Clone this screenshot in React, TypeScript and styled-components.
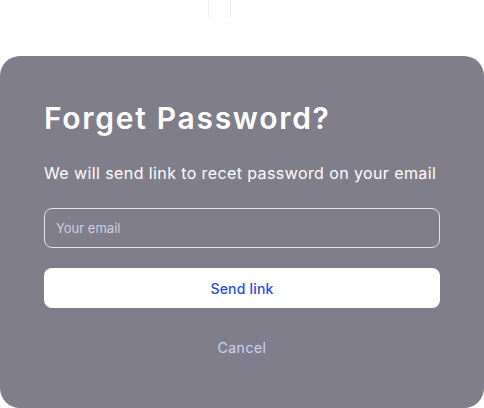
import React, { useState } from 'react';
import styled, { createGlobalStyle } from 'styled-components';

const GlobalStyle = createGlobalStyle`
  html, body {
    margin: 0;
    padding: 0;
    background: #ffffff;
    font-family: Inter, "Open Sans", Arial, sans-serif;
  }
  * { box-sizing: border-box; }
`;

const Page = styled.div`
  width: 484px;
  height: 408px;
  display: flex;
  flex-direction: column;
  overflow: hidden;
`;

const TopArea = styled.div`
  height: 56px;
  padding-left: 208px;
  display: flex;
`;

const Handle = styled.div`
  width: 23px;
  height: 18px;
  border-left: 1px solid #f1f1f3;
  border-right: 1px solid #ececef;
`;

const Sheet = styled.div`
  flex: 1;
  background: #7f7e8a;
  border-radius: 20px;
  padding: 43px 44px 0;
  display: flex;
  flex-direction: column;
`;

const Title = styled.h1`
  margin: 0;
  color: #ffffff;
  font-size: 30px;
  font-weight: 600;
  line-height: 38px;
  letter-spacing: 1.7px;
`;

const Subtitle = styled.p`
  margin: 25px 0 0;
  color: #ffffff;
  font-size: 16px;
  line-height: 22px;
  font-weight: 400;
  letter-spacing: 0.4px;
`;

const Input = styled.input`
  margin-top: 24px;
  height: 40px;
  width: 100%;
  border: 1px solid #e4e4ee;
  border-radius: 8px;
  background: transparent;
  padding: 0 11px;
  color: #ffffff;
  font-family: inherit;
  font-size: 13px;
  outline: none;

  &::placeholder {
    color: #d0d0e4;
  }
`;

const Button = styled.button`
  margin-top: 20px;
  height: 40px;
  width: 100%;
  border: none;
  border-radius: 8px;
  background: #ffffff;
  color: #1f4fd8;
  font-family: inherit;
  font-size: 14px;
  font-weight: 500;
  letter-spacing: 0.2px;
  cursor: pointer;
`;

const CancelButton = styled.button`
  margin-top: 30px;
  align-self: center;
  background: none;
  border: none;
  color: #c9d6f7;
  font-family: inherit;
  font-size: 14px;
  line-height: 20px;
  letter-spacing: 0.5px;
  padding: 0;
  cursor: pointer;
`;

const App: React.FC = () => {
  const [email, setEmail] = useState('');

  return (
    <>
      <GlobalStyle />
      <Page>
        <TopArea>
          <Handle />
        </TopArea>
        <Sheet>
          <Title>Forget Password?</Title>
          <Subtitle>We will send link to recet password on your email</Subtitle>
          <Input
            type="email"
            placeholder="Your email"
            value={email}
            onChange={(e) => setEmail(e.target.value)}
          />
          <Button type="button">Send link</Button>
          <CancelButton type="button">Cancel</CancelButton>
        </Sheet>
      </Page>
    </>
  );
};

export default App;
